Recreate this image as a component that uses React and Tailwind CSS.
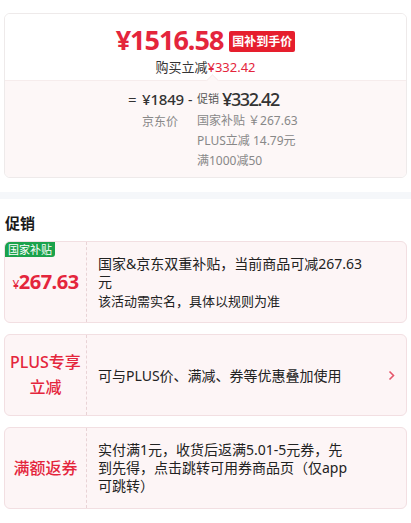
const font = { fontFamily: '"Noto Sans", "Noto Sans CJK SC", sans-serif' };

function PromoCard({ left, children, arrow }) {
    return (
        <div className="mx-[4px] flex h-[82px] rounded-[6px] border border-[#f2dfe2] bg-[#fdf5f6] relative overflow-hidden">
            <div className="w-[82px] shrink-0 flex items-center justify-center border-r border-dashed border-[#e9d3d6]">
                {left}
            </div>
            <div className="flex-1 flex items-center pl-[11px] pr-[11px]">
                <div className="flex-1">{children}</div>
                {arrow && (
                    <svg width="7" height="11" viewBox="0 0 7 11">
                        <path d="M1.5 1.5 L5.5 5.5 L1.5 9.5" fill="none" stroke="#e5556a" strokeWidth="1.6" />
                    </svg>
                )}
            </div>
        </div>
    );
}

export default function App() {
    return (
        <div className="w-[411px] h-[523px] bg-white overflow-hidden text-[#1a1a1a]" style={font}>
            {/* price card */}
            <div className="pt-[13px]">
                <div className="mx-[4px] rounded-[6px] border border-[#eeeaea] overflow-hidden">
                    <div className="bg-white h-[66px] flex flex-col items-center pt-[9px]">
                        <div className="flex items-center gap-[6px] h-[34px]">
                            <span className="text-[#e4253c] font-bold text-[27px] leading-[34px] tracking-[-1px]">
                                ¥1516.58
                            </span>
                            <span className="bg-[#e61e2d] text-white text-[12px] font-bold leading-[21px] px-[3px] rounded-[2px] mt-[2px]">
                                国补到手价
                            </span>
                        </div>
                        <div className="text-[13px] leading-[18px] text-[#333] mt-[1px]">
                            购买立减<span className="text-[#e4253c]">¥332.42</span>
                        </div>
                    </div>
                    <div className="relative bg-[#fdf7f7] border-t border-[#f6ecec] h-[97px]">
                        <div className="absolute left-[203px] -top-[5px] w-[9px] h-[9px] bg-[#fdf7f7] rotate-45 border-l border-t border-[#f6ecec]"></div>
                        <div className="flex pl-[123px] pt-[6px]">
                            <div className="w-[14px] h-[24px] flex items-center text-[15px] text-[#333]">=</div>
                            <div className="w-[46px] flex flex-col">
                                <div className="h-[24px] flex items-center text-[15px] font-medium text-[#333] tracking-[-0.2px]">
                                    ¥1849
                                </div>
                                <div className="text-[12px] text-[#888] leading-[20px] mt-[1px]">京东价</div>
                            </div>
                            <div className="w-[9px] h-[24px] flex items-center text-[14px] text-[#333]">-</div>
                            <div className="flex flex-col">
                                <div className="flex items-center h-[24px]">
                                    <span className="text-[11px] text-[#555] mr-[3px]">促销</span>
                                    <span className="text-[18px] font-medium text-[#333] tracking-[-1.4px]">¥332.42</span>
                                </div>
                                <div className="text-[12px] text-[#888] leading-[20px]">
                                    <div>国家补贴 ￥267.63</div>
                                    <div>PLUS立减 14.79元</div>
                                    <div>满1000减50</div>
                                </div>
                            </div>
                        </div>
                    </div>
                </div>
            </div>

            <div className="mt-[14px] h-[7px] bg-[#f5f7fa]"></div>

            <div className="px-[5px] pt-[13px] pb-[7px] text-[15px] font-bold leading-[22px]">促销</div>

            <div className="flex flex-col gap-[11px]">
                <PromoCard
                    left={
                        <>
                            <span className="absolute left-0 top-0 bg-[#1ba24b] text-white text-[11px] leading-[15px] px-[3px] rounded-br-[3px]">
                                国家补贴
                            </span>
                            <span className="text-[#e4253c] font-bold text-[20px] tracking-[-0.5px]">
                                <span className="text-[12px] font-normal">¥</span>267.63
                            </span>
                        </>
                    }
                >
                    <div className="w-[275px]">
                        <div className="text-[14px] leading-[18px] text-[#222]">
                            国家&京东双重补贴，当前商品可减267.63元
                        </div>
                        <div className="text-[13px] leading-[18px] text-[#222] mt-[1px]">
                            该活动需实名，具体以规则为准
                        </div>
                    </div>
                </PromoCard>

                <PromoCard
                    arrow
                    left={
                        <span className="text-[#e4253c] text-[16px] font-medium text-center leading-[25px]">
                            PLUS专享
                            <br />
                            立减
                        </span>
                    }
                >
                    <div className="text-[14px] text-[#222]">可与PLUS价、满减、券等优惠叠加使用</div>
                </PromoCard>

                <PromoCard
                    left={<span className="text-[#e4253c] text-[16px] font-medium">满额返券</span>}
                >
                    <div className="w-[255px] text-[14px] leading-[18px] text-[#222]">
                        实付满1元，收货后返满5.01-5元券，先到先得，点击跳转可用券商品页（仅app可跳转）
                    </div>
                </PromoCard>
            </div>
        </div>
    );
}
